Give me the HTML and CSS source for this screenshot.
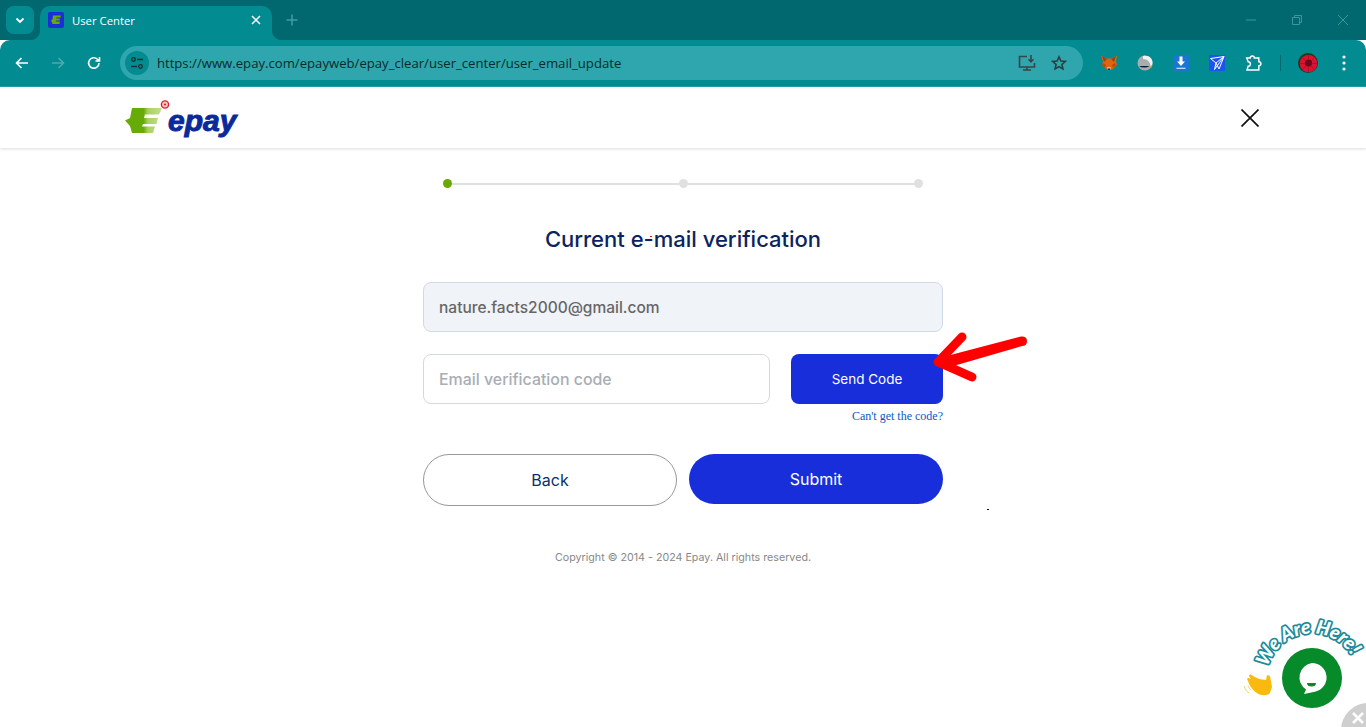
FILE: index.html
```html
<!DOCTYPE html>
<html lang="en">
<head>
  <meta charset="UTF-8">
  <meta name="viewport" content="width=device-width, initial-scale=1.0">
  <title>User Center</title>
  <link rel="stylesheet" href="styles.css">
</head>
<body>

  <div class="tabStrip">
    <button type="button" class="tabStrip__search">
      <svg width="12" height="12" viewBox="0 0 12 12"><path d="M2.5 4.500 6 8l3.500-3.500" fill="none" stroke="#fff" stroke-width="1.800"/></svg>
    </button>
    <div class="tab">
      <span class="tab__icon">
        <svg width="16" height="16" viewBox="0 0 16 16"><rect width="16" height="16" rx="2" fill="#1a2fd8"/><path d="M5 3.500h8l-.5 2H8.500l-.2 1H12l-.5 2H8l-.2 1H12l-.5 2.500H4.500L3 8l1.500-.5z" fill="#6aa80c"/></svg>
      </span>
      <span class="tab__title">User Center</span>
      <svg class="tab__close" width="10" height="10" viewBox="0 0 10 10"><path d="M1 1l8 8M9 1 1 9" stroke="#fff" stroke-width="1.500"/></svg>
    </div>
    <svg class="tabStrip__new" width="12" height="12" viewBox="0 0 12 12"><path d="M6 .5v11M.5 6h11" stroke="#3f9ea3" stroke-width="1.500"/></svg>
    <div class="windowBtns">
      <svg width="12" height="12" viewBox="0 0 12 12"><path d="M1 6h10" stroke="#3b979c" stroke-width="1"/></svg>
      <svg width="12" height="12" viewBox="0 0 12 12"><path d="M1.500 3.500h7v7h-7zM3.500 3.500v-2h7v7h-2" fill="none" stroke="#3b979c" stroke-width="1"/></svg>
      <svg width="12" height="12" viewBox="0 0 12 12"><path d="M1 1l10 10M11 1 1 11" stroke="#3b979c" stroke-width="1"/></svg>
    </div>
  </div>

  <div class="toolbar">
    <div class="toolbar__nav">
      <svg width="16" height="16" viewBox="0 0 16 16"><path d="M14 8H3M7.500 3 2.500 8l5 5" fill="none" stroke="#fff" stroke-width="1.600"/></svg>
      <svg width="16" height="16" viewBox="0 0 16 16"><path d="M2 8h11M8.500 3l5 5-5 5" fill="none" stroke="#4fa9ae" stroke-width="1.600"/></svg>
      <svg width="16" height="16" viewBox="0 0 16 16"><path d="M13 8a5.200 5.200 0 1 1-1.500-3.700L13.500 6M13.500 2v4h-4" fill="none" stroke="#fff" stroke-width="1.600"/></svg>
    </div>
    <div class="omnibox">
      <span class="omnibox__site">
        <svg width="14" height="14" viewBox="0 0 14 14" fill="none" stroke="#10302f" stroke-width="1.300"><circle cx="3.500" cy="3.500" r="1.800"/><path d="M7 3.500h6M1 10.500h6"/><circle cx="10.500" cy="10.500" r="1.800"/></svg>
      </span>
      <span class="omnibox__url">https://www.epay.com/epayweb/epay_clear/user_center/user_email_update</span>
      <svg class="omnibox__icon" width="18" height="18" viewBox="0 0 18 18" fill="none" stroke="#33474a" stroke-width="1.600"><path d="M9 2.500H1.500v10.500h15V9M5 16h8M9 13v3"/><path d="M13 1v6.500M10.500 5.300 13 7.800l2.500-2.500"/></svg>
      <svg class="omnibox__star" width="16" height="16" viewBox="0 0 18 18" fill="none" stroke="#2a3d40" stroke-width="1.800"><path d="m9 2 2.100 4.700 5 .5-3.800 3.400 1.100 5L9 13l-4.400 2.600 1.100-5-3.800-3.400 5-.5z"/></svg>
    </div>
    <div class="extList">
      <svg width="16" height="16" viewBox="0 0 16 16"><path d="M0 .5l6 3h4l6-3-1 6 1 3-3 3.500-3 2H7l-3-2-3-3.500 1-3z" fill="#e2620f"/><path d="M1 1l5 3-3 3zM15 1l-5 3 3 3z" fill="#8f4a1c"/><path d="M2 8l3 2-1 3-3-3zM14 8l-3 2 1 3 3-3z" fill="#b04e0e"/><path d="M6 12h4l-1 3H7z" fill="#c9b9a8"/><path d="M7 13.500h2v1.500H7z" fill="#333"/></svg>
      <svg width="16" height="16" viewBox="0 0 16 16"><circle cx="8" cy="8" r="7.500" fill="#a9adb0"/><path d="M6 1c5-1.500 10 2 9.500 7 0 2-1 3-2 4 .5-4-2.500-8-7.500-8z" fill="#f1f1f1"/><path d="M2 11h10.500a7 4.500 0 0 1-10.500 0z" fill="#101c3d"/><path d="M13.500 11l2-1-.5 2-1.500 1.500z" fill="#e98f24"/></svg>
      <svg width="16" height="16" viewBox="0 0 16 16"><rect width="16" height="16" fill="#1976d2"/><path d="M6.500 1.500h3v5H12L8 11 4 6.500h2.500z" fill="#fff"/><path d="M3.500 13.300h9" stroke="#cfe4f8" stroke-width="1.200"/></svg>
      <svg width="16" height="16" viewBox="0 0 16 16"><rect width="16" height="16" rx="1" fill="#1a55f0"/><path d="M1.500 3.500 15 1.500 10 14 7 8zM15 1.500 7 8l-1.500 6.500M15 1.500 5.500 14.500" fill="none" stroke="#fff" stroke-width="1"/></svg>
      <svg width="18" height="18" viewBox="0 0 16 16"><path d="M1.500 3.500h3.200a1.800 1.800 0 0 1 3.600 0h4v3.400a1.800 1.800 0 0 1 0 3.600v3.700H1.800l1-3.300a2 2 0 0 0 0-4z" fill="none" stroke="#fff" stroke-width="1.300"/></svg>
    </div>
    <span class="toolbar__divider"></span>
    <span class="avatar">
      <svg width="20" height="20" viewBox="0 0 20 20"><circle cx="10" cy="10" r="10" fill="#1c3a1a"/><circle cx="10.500" cy="10.500" r="8.800" fill="#dc1232"/><circle cx="10.500" cy="10" r="3.500" fill="#5e0a16"/><path d="M10.500 2v17M2 10.500h17M4.500 4.500l12 12M16.500 4.500l-12 12" stroke="#a80c24" stroke-width=".7"/><circle cx="10.500" cy="10" r="3" fill="#6b0b19"/></svg>
    </span>
    <svg class="toolbar__menu" width="4" height="16" viewBox="0 0 4 16"><circle cx="2" cy="2" r="1.600" fill="#fff"/><circle cx="2" cy="8" r="1.600" fill="#fff"/><circle cx="2" cy="14" r="1.600" fill="#fff"/></svg>
  </div>

  <header class="siteHeader">
    <svg class="siteHeader__logo" width="116" height="40" viewBox="0 0 116 40">
      <defs>
        <linearGradient id="logoGreen" x1="0" x2="1" y1="0" y2="0">
          <stop offset=".5" stop-color="#66ab08"/>
          <stop offset=".62" stop-color="#a9d060"/>
          <stop offset="1" stop-color="#c4e08e"/>
        </linearGradient>
      </defs>
      <path d="M8 10H38L35 16.500H21L20 20H34L32.500 26H19L18 28.500H31L29 35H8L6 28 1 22.500 6 20z" fill="url(#logoGreen)"/>
      <circle cx="41" cy="6.500" r="3.600" fill="#f4c6c6" stroke="#d8232a" stroke-width="1.400"/>
      <circle cx="41" cy="6.500" r="1.100" fill="#d8232a"/>
      <text class="siteHeader__brand" x="44" y="32.500">epay</text>
    </svg>
    <svg class="siteHeader__close" width="18" height="18" viewBox="0 0 18 18"><path d="M.5.5l17 17M17.500.5l-17 17" stroke="#111" stroke-width="1.700"/></svg>
  </header>

  <main class="verifyBox">
    <div class="steps">
      <span class="steps__dot steps__dot--active"></span>
      <span class="steps__line"></span>
      <span class="steps__dot"></span>
      <span class="steps__line"></span>
      <span class="steps__dot"></span>
    </div>

    <h1 class="verifyBox__title">Current e-mail verification</h1>

    <div class="field field--readonly">nature.facts2000@gmail.com</div>

    <div class="codeRow">
      <div class="field field--code">Email verification code</div>
      <div class="codeRow__side">
        <button type="button" class="sendBtn">Send Code</button>
        <a class="codeRow__help" href="#">Can't get the code?</a>
      </div>
    </div>

    <div class="actions">
      <button type="button" class="actions__btn actions__btn--back">Back</button>
      <button type="button" class="actions__btn actions__btn--submit">Submit</button>
    </div>

    <p class="copyright">Copyright © 2014 - 2024 Epay. All rights reserved.</p>
  </main>

  <!-- red arrow someone drew on the screenshot -->
  <svg class="markArrow" width="110" height="60" viewBox="0 0 110 60" stroke-linecap="round" stroke-linejoin="round">
    <path d="M37 7 13 32l34 15" fill="none" stroke="#f00" stroke-width="9"/>
    <path d="M14 28 96 6.500Q102 6 102 11T97 16L18 39z" fill="#f00"/>
  </svg>
  <span class="speck speck--title"></span>
  <span class="speck speck--page"></span>

  <svg class="chatWidget" width="130" height="117" viewBox="0 0 130 117">
    <defs>
      <path id="chatArc" d="M31 60A46 46 0 0 1 122 68"/>
    </defs>
    <text class="chatWidget__label"><textPath href="#chatArc" startOffset="3">We Are Here!</textPath></text>
    <circle cx="76" cy="68" r="30" fill="#068a2a"/>
    <path d="M76 53a14.500 14.500 0 0 1 3 28.700L68 84l2-4.500A14.500 14.500 0 0 1 76 53z" fill="#fff"/>
    <path d="M71 73h9a4.500 3.500 0 0 1-9 0z" fill="#068a2a"/>
    <path d="M12 71c-2-3 0-4 3-2l-2-3c0-2 2-2 4 0l6 3 7 1 1-5 3 1 2 11-2 6c-3 3-9 3-13 0-3-2-7-6-9-12z" fill="#f9b90e"/>
    <path d="M8 76c1 3 2 5 5 7M12 76c1 2 2 3 3 4" fill="none" stroke="#f7d35c" stroke-width="1"/>
    <circle cx="132" cy="120" r="27" fill="#cfcfcf"/>
    <path d="M117 103l10 10M127 103l-10 10" stroke="#fff" stroke-width="2.500"/>
  </svg>

</body>
</html>
```

FILE: styles.css
```css
* {
  box-sizing: border-box;
  padding: 0;
  margin: 0;
}
html, body {
  height: 100%;
  overflow: hidden;
}
body {
  position: relative;
  display: flex;
  flex-direction: column;
  background-color: #fff;
  font-family: Inter, "Liberation Sans", sans-serif;
}
button {
  border: none;
  font-family: inherit;
}
svg {
  display: block;
  flex-shrink: 0;
}

/* browser top */
.tabStrip {
  display: flex;
  align-items: flex-end;
  height: 40px;
  padding-left: 6px;
  background-color: #02686f;
}
.tabStrip__search {
  display: flex;
  align-items: center;
  justify-content: center;
  width: 28px;
  height: 28px;
  margin-bottom: 6px;
  border-radius: 8px;
  background-color: #038b92;
}
.tab {
  position: relative;
  display: flex;
  align-items: center;
  width: 232px;
  height: 34px;
  margin-left: 6px;
  padding: 0 11px 6px 8px;
  border-radius: 10px 10px 0 0;
  background-color: #038b92;
  color: #fff;
  font-family: "Open Sans", sans-serif;
  font-size: 11.300px;
}
.tab::before, .tab::after {
  content: "";
  position: absolute;
  bottom: 0;
  width: 10px;
  height: 10px;
}
.tab::before {
  left: -10px;
  background: radial-gradient(circle at 0 0, transparent 10px, #038b92 10.5px);
}
.tab::after {
  right: -10px;
  background: radial-gradient(circle at 100% 0, transparent 10px, #038b92 10.5px);
}
.tab__icon {
  margin-right: 8px;
}
.tab__title {
  flex-grow: 2;
}
.tabStrip__new {
  margin: 0 0 14px 14px;
}
.windowBtns {
  display: flex;
  gap: 34px;
  margin-left: auto;
  margin-bottom: 14px;
  padding-right: 17px;
}
.toolbar {
  display: flex;
  align-items: center;
  height: 47px;
  padding: 0 20px 1px 14px;
  border-bottom: 1px solid #1fa0a6;
  border-radius: 10px 10px 0 0;
  background-color: #038b92;
}
.toolbar__nav {
  display: flex;
  gap: 20px;
  width: 106px;
}
.omnibox {
  display: flex;
  align-items: center;
  width: 964px;
  height: 34px;
  padding: 0 16px 0 5px;
  border-radius: 17px;
  background-color: #2fa6ad;
}
.omnibox__site {
  display: flex;
  align-items: center;
  justify-content: center;
  width: 24px;
  height: 24px;
  border-radius: 50%;
  background-color: #038b92;
}
.omnibox__url {
  flex-grow: 2;
  margin-left: 8px;
  color: #0c2a2c;
  font-family: "Open Sans", sans-serif;
  font-size: 13.150px;
}
.omnibox__star {
  margin-left: 15px;
}
.extList {
  display: flex;
  align-items: center;
  gap: 20px;
  margin-left: 18px;
}
.toolbar__divider {
  width: 1px;
  height: 16px;
  margin-left: 17px;
  background-color: #04696f;
}
.avatar {
  margin-left: 17px;
}
.toolbar__menu {
  margin-left: 24px;
}

/* site */
.siteHeader {
  display: flex;
  align-items: center;
  justify-content: space-between;
  height: 61px;
  padding: 0 107px 0 124px;
  background-color: #fff;
  box-shadow: 0 1px 3px rgba(0,0,0,0.14);
}
.siteHeader__brand {
  fill: #0a2a9c;
  font-family: "Liberation Sans", sans-serif;
  font-size: 30px;
  font-style: italic;
  font-weight: 700;
  stroke: #0a2a9c;
  stroke-width: 1px;
}
.verifyBox {
  display: flex;
  flex-direction: column;
  align-items: center;
  width: 520px;
  margin: 0 auto;
  padding-top: 31px;
}
.steps {
  display: flex;
  align-items: center;
  width: 480px;
}
.steps__dot {
  width: 9px;
  height: 9px;
  border-radius: 50%;
  background-color: #e0e0e0;
}
.steps__dot--active {
  background-color: #6aaa00;
}
.steps__line {
  flex-grow: 2;
  height: 2px;
  background-color: #e0e0e0;
}
.verifyBox__title {
  margin-top: 37px;
  color: #0b2460;
  font-size: 22px;
  font-weight: 500;
  line-height: 28px;
}
.field {
  display: flex;
  align-items: center;
  height: 50px;
  padding: 0 15px;
  border: 1px solid #d3d9e4;
  border-radius: 8px;
  font-weight: 500;
}
.field--readonly {
  width: 100%;
  margin-top: 29px;
  background-color: #f0f3f8;
  color: #666;
  font-size: 15.500px;
}
.field--code {
  width: 347px;
  background-color: #fff;
  color: #a9adb5;
  font-size: 15.900px;
}
.codeRow {
  display: flex;
  justify-content: space-between;
  width: 100%;
  margin-top: 22px;
}
.codeRow__side {
  display: flex;
  flex-direction: column;
  align-items: flex-end;
  width: 152px;
}
.sendBtn {
  width: 100%;
  height: 50px;
  padding-bottom: 1px;
  border-radius: 8px;
  background-color: #192edb;
  color: #fff;
  font-size: 13.500px;
  font-weight: 400;
}
.codeRow__help {
  margin-top: 5px;
  color: #0a58c6;
  font-family: "Liberation Serif", serif;
  font-size: 12px;
  line-height: 14px;
  text-decoration: none;
}
.actions {
  display: flex;
  gap: 12px;
  width: 100%;
  margin-top: 31px;
}
.actions__btn {
  width: 254px;
  height: 50px;
  border-radius: 26px;
  font-size: 16px;
  font-weight: 400;
}
.actions__btn--back {
  height: 52px;
  border: 1px solid #999;
  background-color: #fff;
  color: #0b2f6b;
}
.actions__btn--submit {
  background-color: #192edb;
  color: #fff;
}
.copyright {
  margin-top: 45px;
  color: #888;
  font-size: 10.700px;
  line-height: 14px;
}

/* things lying on top of the page */
.markArrow {
  position: absolute;
  left: 925px;
  top: 330px;
}
.speck {
  position: absolute;
  width: 2px;
  height: 1px;
}
.speck--title {
  left: 650px;
  top: 236px;
  background-color: #e11;
}
.speck--page {
  left: 987px;
  top: 509px;
  background-color: #300;
}
.chatWidget {
  position: absolute;
  right: 0;
  bottom: 0;
}
.chatWidget__label {
  fill: #fff;
  font-family: Lato, sans-serif;
  font-size: 19px;
  font-style: italic;
  font-weight: 900;
  paint-order: stroke;
  stroke: #1c8a9a;
  stroke-width: 3.500px;
  stroke-linejoin: round;
}
```
